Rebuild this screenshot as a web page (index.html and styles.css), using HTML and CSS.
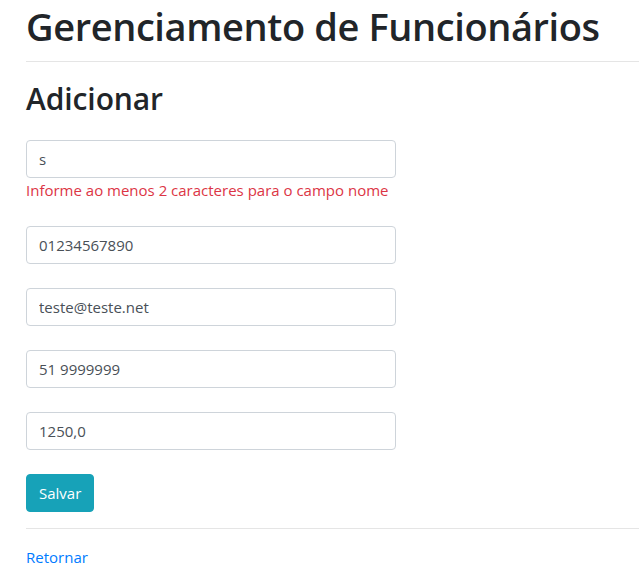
FILE: index.html
```html
<!DOCTYPE html>
<html lang="pt-BR">
<head>
<meta charset="utf-8">
<title>Gerenciamento de Funcionários</title>
<link rel="stylesheet" href="styles.css">
</head>
<body>
<div class="page">
  <h1 class="title">Gerenciamento de Funcionários</h1>
  <hr class="rule rule-top">
  <h2 class="subtitle">Adicionar</h2>
  <form class="form">
    <div class="group">
      <input class="field" type="text" value="s">
      <span class="error">Informe ao menos 2 caracteres para o campo nome</span>
    </div>
    <div class="group">
      <input class="field" type="text" value="01234567890">
    </div>
    <div class="group">
      <input class="field" type="text" value="teste@teste.net">
    </div>
    <div class="group">
      <input class="field" type="text" value="51 9999999">
    </div>
    <div class="group">
      <input class="field" type="text" value="1250,0">
    </div>
    <button class="btn" type="button">Salvar</button>
  </form>
  <hr class="rule rule-bottom">
  <a class="link" href="#">Retornar</a>
</div>
</body>
</html>
```

FILE: styles.css
```css
* { box-sizing: border-box; }
html, body { margin: 0; padding: 0; }
body {
  font-family: "Open Sans", "Noto Sans", sans-serif;
  font-size: 16px;
  line-height: 1.5;
  color: #212529;
  background: #fff;
  overflow: hidden;
}
.page {
  padding-left: 26px;
}
.title {
  margin: 0;
  font-size: 38px;
  font-weight: 600;
  line-height: 52px;
  letter-spacing: -0.4px;
  white-space: nowrap;
}
.rule {
  border: 0;
  border-top: 1px solid rgba(0,0,0,0.1);
  margin: 0;
}
.rule-top { margin-top: 9px; }
.subtitle {
  margin: 14px 0 0;
  font-size: 30px;
  font-weight: 600;
  line-height: 46px;
  letter-spacing: -0.1px;
}
.form {
  display: flex;
  flex-direction: column;
  align-items: flex-start;
  margin-top: 18px;
}
.group {
  display: flex;
  flex-direction: column;
  margin-bottom: 24px;
}
.field {
  width: 370px;
  height: 38px;
  padding: 6px 12px;
  font: inherit;
  font-size: 15px;
  color: #495057;
  background: #fff;
  border: 1px solid #ced4da;
  border-radius: 4px;
  outline: none;
}
.error {
  color: #dc3545;
  font-size: 15px;
  line-height: 24px;
}
.btn {
  height: 38px;
  padding: 6px 12px;
  font: inherit;
  font-size: 15px;
  color: #fff;
  background: #17a2b8;
  border: 1px solid #17a2b8;
  border-radius: 4px;
}
.rule-bottom { margin-top: 16px; }
.link {
  display: inline-block;
  margin-top: 16px;
  color: #007bff;
  text-decoration: none;
  font-size: 15px;
  line-height: 24px;
}
```
